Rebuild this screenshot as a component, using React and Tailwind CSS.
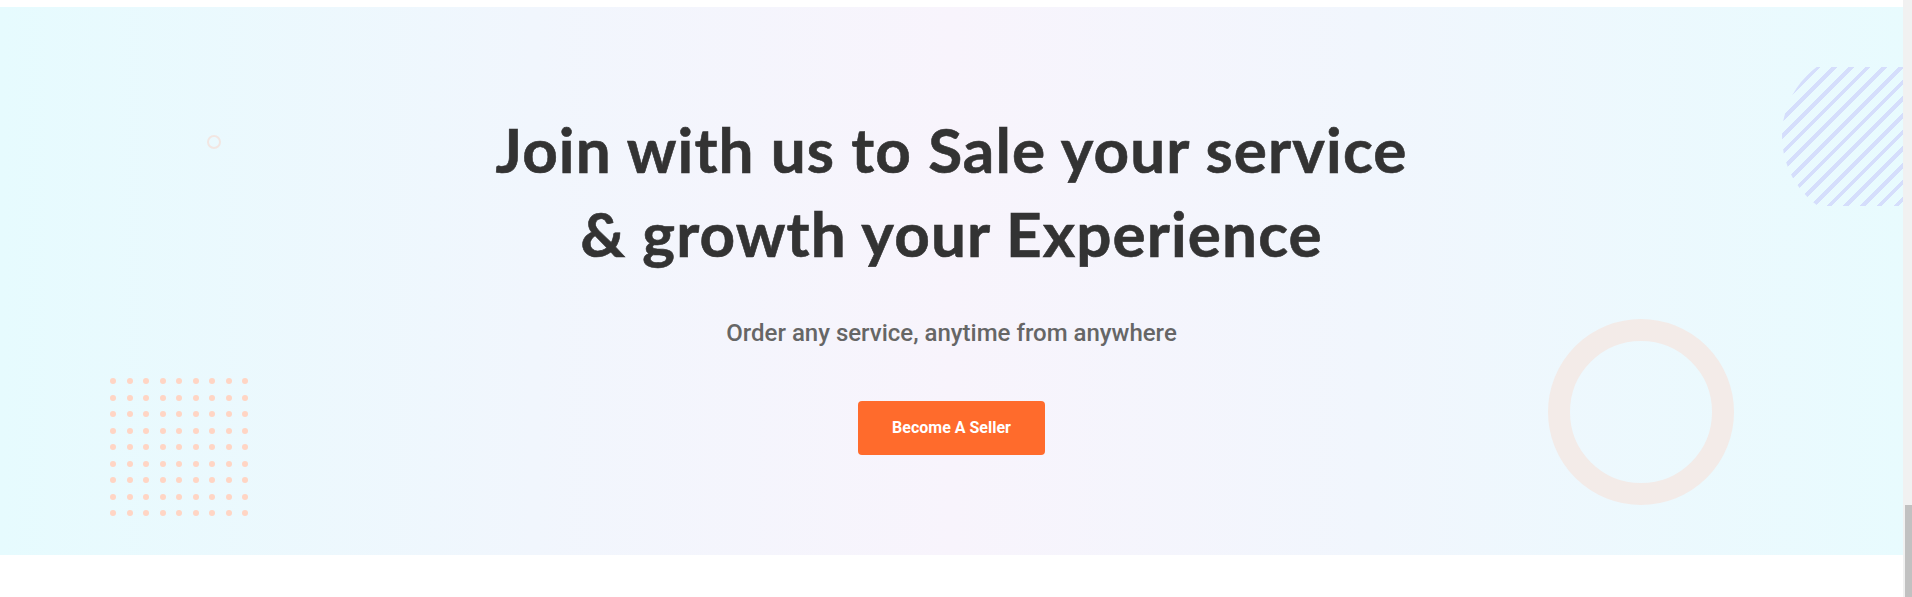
import React from "react";

export default function App() {
  const dots = Array.from({ length: 81 });
  return (
    <div className="flex w-full h-[597px] bg-white overflow-hidden">
      <div className="flex-1 flex flex-col">
        <div className="h-[7px] bg-white" />
        <section className="relative h-[548px] overflow-hidden bg-[linear-gradient(90deg,#e6fbfe_0%,#f1f6fd_28%,#f8f4fc_50%,#f1f6fd_72%,#e8fbfe_100%)]">
          {/* small ring */}
          <div className="absolute left-[207px] top-[128px] w-[14px] h-[14px] rounded-full border-2 border-[#f2e6e2]" />
          {/* dots grid */}
          <div className="absolute left-[110px] top-[371px] grid grid-cols-9 gap-x-[10.5px] gap-y-[10.5px]">
            {dots.map((_, i) => (
              <span key={i} className="block w-[6px] h-[6px] rounded-full bg-[#ffd5c4]" />
            ))}
          </div>
          {/* big ring */}
          <div className="absolute left-[1548px] top-[312px] w-[186px] h-[186px] rounded-full border-[22px] border-[#f3ebe8]" />
          {/* striped circle */}
          <div className="absolute left-[1782px] top-[60px] w-[121px] h-[139px] overflow-hidden">
            <div className="absolute left-0 top-[-17px] w-[172px] h-[172px] rounded-full bg-[repeating-linear-gradient(135deg,#d5defc_0px,#d5defc_4px,transparent_4px,transparent_11.8px)]" />
          </div>

          <div className="relative flex flex-col items-center pt-[100px]">
            <h2 className="text-center text-[62px] leading-[84px] font-bold text-[#333333] font-['Lato',sans-serif] tracking-[1.1px] [-webkit-text-stroke:0.6px_#333333]">
              Join with us to Sale your service
              <br />
              &amp; growth your Experience
            </h2>
            <p className="mt-[42px] text-[24px] leading-[32px] font-medium text-[#666666] font-['Roboto',sans-serif]">
              Order any service, anytime from anywhere
            </p>
            <button className="mt-[52px] w-[187px] h-[54px] rounded-[4px] bg-[#ff6b2c] text-white text-[16px] font-bold font-['Roboto',sans-serif]">
              Become A Seller
            </button>
          </div>
        </section>
        <div className="flex-1 bg-white" />
      </div>
      <div className="w-[9px] bg-[#f1f1f1] flex flex-col justify-end">
        <div className="ml-[2px] w-[7px] h-[92px] bg-[#c1c1c1]" />
      </div>
    </div>
  );
}
